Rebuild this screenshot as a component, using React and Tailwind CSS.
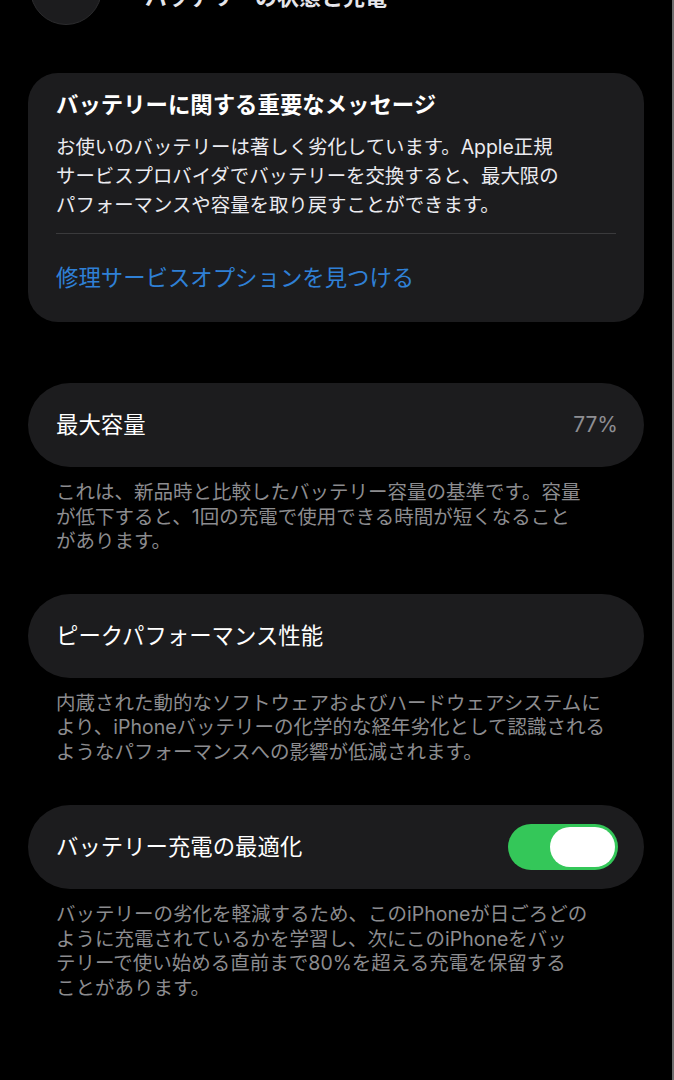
import React from 'react';

const font = { fontFamily: 'Inter, "Noto Sans CJK JP", "Noto Sans", sans-serif' };

const Lines = ({ lines, className }) => (
    <div className={className}>
        {lines.map((l, i) => (
            <div key={i} className="whitespace-nowrap">{l}</div>
        ))}
    </div>
);

const Row = ({ children }) => (
    <div className="mx-[28px] h-[84px] rounded-full bg-[#1c1c1e] flex items-center justify-between pl-[28px] pr-[26px]">
        {children}
    </div>
);

const Footnote = ({ lines }) => (
    <Lines lines={lines} className="px-[56px] pt-[13px] text-[19.5px] leading-[24.5px] text-[#8c8c8f]" />
);

const Toggle = () => (
    <div className="w-[110px] h-[46px] rounded-full bg-[#34c759] flex items-center justify-end pr-[3px]">
        <div className="w-[65px] h-[40px] rounded-full bg-white" />
    </div>
);

export default function App() {
    return (
        <div className="w-[674px] h-[1080px] bg-black overflow-hidden flex" style={font}>
            <div className="w-[672px] h-full">
                <div className="flex items-center -mt-[47px] h-[72px] pl-[30px]">
                    <div className="w-[72px] h-[72px] rounded-full bg-[#1c1c1e] border border-[#2c2c2e] flex items-center justify-center shrink-0">
                        <svg width="22" height="22" viewBox="0 0 24 24" fill="none" stroke="white" strokeWidth="2.6" strokeLinecap="round" strokeLinejoin="round">
                            <path d="M15 4 L7 12 L15 20" />
                        </svg>
                    </div>
                    <div className="ml-[43px] mt-[16px] text-[22px] font-bold text-[#e5e5ea] whitespace-nowrap">
                        バッテリーの状態と充電
                    </div>
                </div>

                <div className="mt-[48px] mx-[28px] rounded-[30px] bg-[#1c1c1e] px-[28px] pt-[18px] pb-[30px]">
                    <div className="text-[22.4px] leading-[28px] font-bold text-white whitespace-nowrap">
                        バッテリーに関する重要なメッセージ
                    </div>
                    <Lines
                        className="mt-[14px] text-[19.4px] leading-[29px] text-[#ebebf0]"
                        lines={[
                            'お使いのバッテリーは著しく劣化しています。Apple正規',
                            'サービスプロバイダでバッテリーを交換すると、最大限の',
                            'パフォーマンスや容量を取り戻すことができます。',
                        ]}
                    />
                    <div className="mt-[13px] h-px bg-[#3a3a3c]" />
                    <div className="mt-[30px] text-[22.4px] leading-[28px] text-[#2f80d6] whitespace-nowrap">
                        修理サービスオプションを見つける
                    </div>
                </div>

                <div className="mt-[61px]">
                    <Row>
                        <span className="text-[22.4px] text-white">最大容量</span>
                        <span className="text-[21px] text-[#8e8e93]">77%</span>
                    </Row>
                    <Footnote
                        lines={[
                            'これは、新品時と比較したバッテリー容量の基準です。容量',
                            'が低下すると、1回の充電で使用できる時間が短くなること',
                            'があります。',
                        ]}
                    />
                </div>

                <div className="mt-[40px]">
                    <Row>
                        <span className="text-[22.4px] text-white">ピークパフォーマンス性能</span>
                    </Row>
                    <Footnote
                        lines={[
                            '内蔵された動的なソフトウェアおよびハードウェアシステムに',
                            'より、iPhoneバッテリーの化学的な経年劣化として認識される',
                            'ようなパフォーマンスへの影響が低減されます。',
                        ]}
                    />
                </div>

                <div className="mt-[41px]">
                    <Row>
                        <span className="text-[22.4px] text-white">バッテリー充電の最適化</span>
                        <Toggle />
                    </Row>
                    <Footnote
                        lines={[
                            'バッテリーの劣化を軽減するため、このiPhoneが日ごろどの',
                            'ように充電されているかを学習し、次にこのiPhoneをバッ',
                            'テリーで使い始める直前まで80%を超える充電を保留する',
                            'ことがあります。',
                        ]}
                    />
                </div>
            </div>
            <div className="w-[2px] h-full bg-[#6e6e6e]" />
        </div>
    );
}
